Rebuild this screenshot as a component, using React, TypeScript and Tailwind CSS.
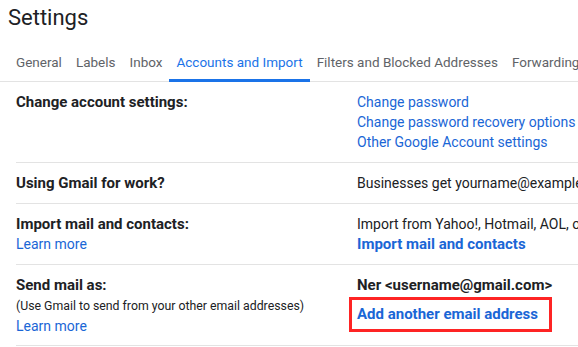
const tabs = [
  "General",
  "Labels",
  "Inbox",
  "Accounts and Import",
  "Filters and Blocked Addresses",
  "Forwarding and POP/IMAP",
];

const link = "text-[#1a66d6] leading-5";
const strong = "font-bold text-[15px] leading-5";
const row = "grid grid-cols-[341px_minmax(0,1fr)] border-b border-[#e3e3e3] whitespace-nowrap";

export default function App() {
  return (
    <div
      className="w-[578px] h-[347px] overflow-hidden bg-white text-[14px] text-[#202124]"
      style={{ fontFamily: "Roboto, 'Liberation Sans', sans-serif" }}
    >
      <h1 className="pl-2 pt-[4px] text-[22px] leading-7 text-[#202124]">Settings</h1>

      <nav className="mt-[20px] flex border-b border-[#e3e3e3] pl-[9px] whitespace-nowrap text-[13.5px]">
        {tabs.map((t) => {
          const active = t === "Accounts and Import";
          return (
            <div
              key={t}
              className={
                active
                  ? "shrink-0 px-[7px] pb-[6px] leading-5 text-[#1a73e8] border-b-[3px] border-[#1a73e8] -mb-px"
                  : "shrink-0 px-[7px] pb-[9px] leading-5 text-[#5f6368]"
              }
            >
              {t}
            </div>
          );
        })}
      </nav>

      <div className="pl-4">
        <div className={`${row} py-[10px]`}>
          <div className={strong}>Change account settings:</div>
          <div className="flex flex-col overflow-hidden">
            <span className={link}>Change password</span>
            <span className={link}>Change password recovery options</span>
            <span className={link}>Other Google Account settings</span>
          </div>
        </div>

        <div className={`${row} py-[10px]`}>
          <div className={strong}>Using Gmail for work?</div>
          <div className="overflow-hidden leading-5">
            Businesses get yourname@example.com email, more storage, and admin tools with Google Workspace.
          </div>
        </div>

        <div className={`${row} py-[10px]`}>
          <div className="flex flex-col">
            <span className={strong}>Import mail and contacts:</span>
            <span className={link}>Learn more</span>
          </div>
          <div className="flex flex-col overflow-hidden">
            <span className="leading-5">Import from Yahoo!, Hotmail, AOL, or other webmail or POP3 accounts.</span>
            <span className={`${link} ${strong}`}>Import mail and contacts</span>
          </div>
        </div>

        <div className={`${row} pt-[10px] pb-[9px]`}>
          <div className="flex flex-col">
            <span className={strong}>Send mail as:</span>
            <span className="text-[12.3px] leading-5 mt-[1px]">
              (Use Gmail to send from your other email addresses)
            </span>
            <span className={link}>Learn more</span>
          </div>
          <div className="flex flex-col items-start">
            <span className={strong}>Ner &lt;username@gmail.com&gt;</span>
            <div className="-ml-[8px] mt-[2px] border-[3px] border-[#fe2424] pl-[5px] pr-[11px] pt-[4px] pb-[5px]">
              <span className={`${link} ${strong} block`}>Add another email address</span>
            </div>
          </div>
        </div>
      </div>
    </div>
  );
}
